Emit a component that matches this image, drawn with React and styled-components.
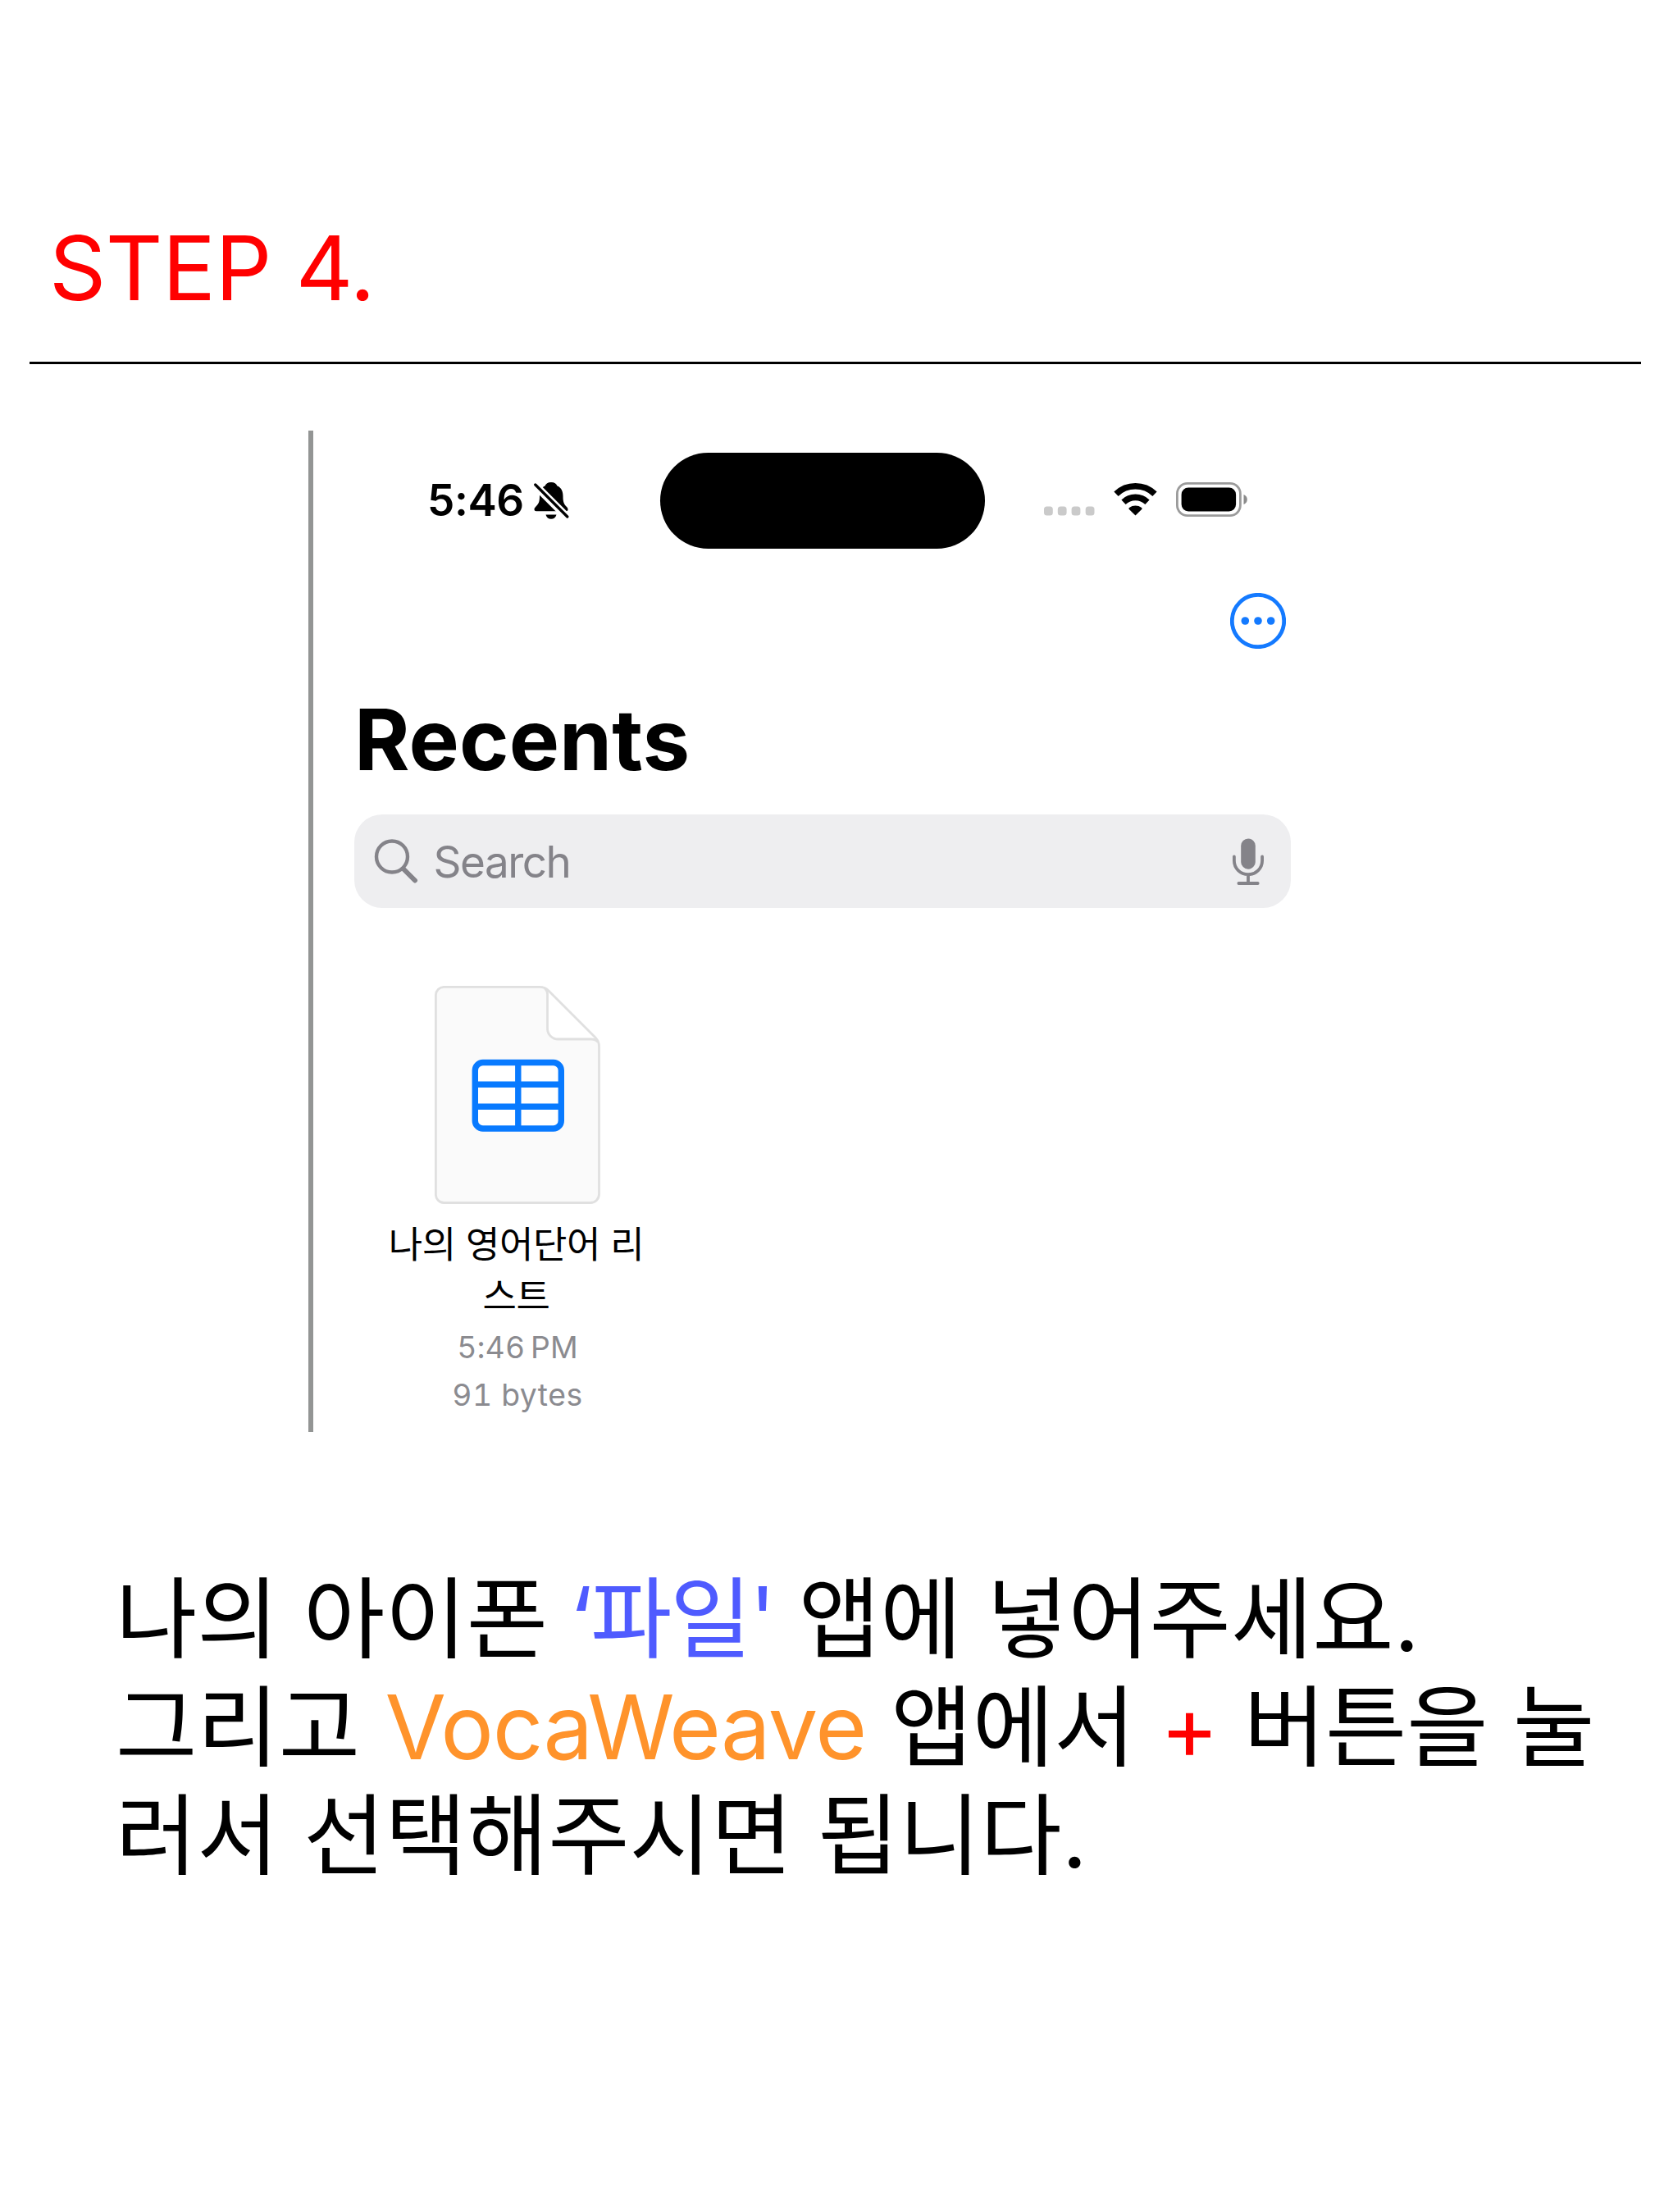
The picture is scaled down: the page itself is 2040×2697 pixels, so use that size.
import React from "react";
import styled, { createGlobalStyle } from "styled-components";

const Global = createGlobalStyle`
  body { margin: 0; background: #fff; }
`;

const Page = styled.main`
  box-sizing: border-box;
  width: 2040px;
  height: 2697px;
  padding-top: 261px;
  background: #fff;
  color: #000;
  font-family: Inter, "Noto Sans CJK KR", sans-serif;
  overflow: hidden;
`;

const StepTitle = styled.h1`
  margin: 0 39px 0 36px;
  padding: 0 0 48px 24px;
  border-bottom: 3px solid #000;
  font-size: 108px;
  font-weight: 400;
  line-height: 132px;
  letter-spacing: -0.5px;
  color: #ff0000;
`;

const Phone = styled.section`
  box-sizing: border-box;
  width: 1206px;
  height: 1221px;
  margin: 81px 0 0 376px;
  padding-top: 27px;
  border-left: 6px solid #939594;
`;

const StatusBar = styled.div`
  display: flex;
  align-items: center;
  height: 117px;
  padding-left: 139px;
`;

const Clock = styled.span`
  width: 129px;
  padding-bottom: 2px;
  font-size: 53px;
  font-weight: 600;
  line-height: 64px;
  letter-spacing: ${(p) => p.$tracking}px;
  white-space: nowrap;
`;

const Island = styled.div`
  width: 396px;
  height: 117px;
  margin: 0 72px 0 111px;
  border-radius: 59px;
  background: #000;
`;

const StatusIcons = styled.div`
  display: flex;
  align-items: center;
  gap: 23px;
  padding-bottom: 3px;
`;

const Icon = styled.svg`
  display: block;
  flex: none;
  width: ${(p) => p.$w}px;
  height: ${(p) => p.$h}px;
`;

const Toolbar = styled.div`
  display: flex;
  justify-content: flex-end;
  padding: 54px 14px 0 0;
`;

const Heading = styled.h2`
  margin: 49px 0 0 50px;
  font-size: 103px;
  font-weight: 700;
  line-height: 124px;
  letter-spacing: ${(p) => p.$tracking}px;
`;

const SearchField = styled.div`
  box-sizing: border-box;
  display: flex;
  align-items: center;
  width: 1142px;
  height: 114px;
  margin: 29px 0 0 50px;
  padding: 0 32px 0 24px;
  border-radius: 34px;
  background: #eeeef0;
  color: #848389;
`;

const Placeholder = styled.span`
  flex: 1;
  margin-left: 18.5px;
  padding-top: 2px;
  font-size: 53px;
  line-height: 64px;
  letter-spacing: ${(p) => p.$tracking}px;
`;

const FileTile = styled.div`
  display: flex;
  flex-direction: column;
  align-items: center;
  width: 340px;
  margin: 95px 0 0 79px;
`;

const FileName = styled.div`
  margin: 18px 3px 1.5px 0;
  font-size: 45px;
  line-height: 63px;
  text-align: center;
  white-space: nowrap;
  letter-spacing: ${(p) => p.$tracking}px;
`;

const FileMeta = styled.div`
  font-size: 37.3px;
  line-height: 58px;
  color: #8b8b90;
  white-space: nowrap;
  font-variant-numeric: tabular-nums;
  letter-spacing: ${(p) => p.$tracking}px;
`;

const Instructions = styled.p`
  margin: 162px 0 0 141px;
  font-size: 108px;
  line-height: 132px;
  white-space: nowrap;
`;

const Mark = styled.span`
  margin-left: ${(p) => p.$before || 0}px;
  letter-spacing: ${(p) => p.$tracking || 0}px;
  color: ${(p) => p.$color};
`;

const BellOff = () => (
  <Icon $w={44} $h={48} viewBox="0 0 44 48">
    <path d="M22 1c4 0 6.500 2 7.500 4.500 5 2 7 6.500 7 12.500 0 7 1 9.500 4.500 13 1 1.200 1.500 2.200 1.500 3.300 0 1.500-1 2-2.500 2H4c-1.500 0-2.500-.700-2.500-2.200 0-1.500.800-2.300 2-3.600C7 27 8 24.500 8 18c0-6.500 2-10.500 6.500-12.500C15.500 3 18 1 22 1z" fill="#000" />
    <path d="M15.500 40.500h13c-.800 3.300-3.400 5.300-6.500 5.300s-5.700-2-6.500-5.300z" fill="#000" />
    <path d="M0 2l43 43" stroke="#fff" strokeWidth="9.500" />
    <path d="M2.800 4l39 39" stroke="#000" strokeWidth="3.300" strokeLinecap="round" />
  </Icon>
);

const SignalDots = () => (
  <Icon $w={62} $h={42} viewBox="0 0 62 42">
    {[0, 16.800, 33.600, 50.700].map((x) => (
      <rect key={x} x={x} y="29.500" width="10.800" height="11" rx="3.500" fill="#cacaca" />
    ))}
  </Icon>
);

const Wifi = () => (
  <Icon $w={53} $h={42} viewBox="0 0 53 42">
    <g fill="none" stroke="#000" strokeWidth="7.600">
      <path d="M3 14.200a34 34 0 0 1 47 0" />
      <path d="M12 24.200a21 21 0 0 1 29 0" />
    </g>
    <path d="M26.500 40.500l-7.700-7.600c-.6-.6-.5-1.400.2-1.900a13 13 0 0 1 15 0c.7.500.8 1.300.2 1.900z" fill="#000" />
  </Icon>
);

const Battery = () => (
  <Icon $w={88} $h={42} viewBox="0 0 88 42">
    <rect x="1.400" y="1.400" width="77" height="39.200" rx="12.500" fill="none" stroke="#9b9b9b" strokeWidth="2.800" />
    <rect x="6.600" y="6.600" width="66.500" height="29" rx="8.500" fill="#000" />
    <path d="M82.500 15c2.600 1 4.300 3.300 4.300 6s-1.700 5-4.300 6z" fill="#8c8c8c" />
  </Icon>
);

const MoreCircle = () => (
  <Icon $w={68} $h={68} viewBox="0 0 68 68">
    <circle cx="34" cy="34" r="31.700" fill="none" stroke="#147aff" strokeWidth="4.800" />
    {[18.300, 34, 49.700].map((x) => (
      <circle key={x} cx={x} cy="34" r="4.800" fill="#147aff" />
    ))}
  </Icon>
);

const Magnifier = () => (
  <Icon $w={54} $h={54} viewBox="0 0 54 54">
    <g fill="none" stroke="currentColor" strokeLinecap="round">
      <circle cx="22" cy="21.500" r="19" strokeWidth="4.400" />
      <path d="M36 36.500l14 14" strokeWidth="6" />
    </g>
  </Icon>
);

const Microphone = () => (
  <Icon $w={40} $h={58} viewBox="0 0 40 58">
    <rect x="11.200" y="1.500" width="17.600" height="37.200" rx="8.800" fill="currentColor" />
    <g fill="none" stroke="currentColor" strokeWidth="3.800" strokeLinecap="round">
      <path d="M2.900 23.500v5a17.100 16.700 0 0 0 34.200 0v-5M20 46v10M8.400 56h23.300" />
    </g>
  </Icon>
);

const SheetFile = () => (
  <Icon $w={202} $h={266} viewBox="0 0 202 266">
    <path d="M11 1.300h117c5 0 8 1.500 11 4.500l57 57c3 3 4.500 6 4.500 11V254a10.500 10.500 0 0 1-10.500 10.500H11A10 10 0 0 1 1.300 254V11A10 10 0 0 1 11 1.300z" fill="#fafafa" />
    <path d="M137.500 6v46a13 13 0 0 0 13 13H196z" fill="#fff" />
    <g fill="none" stroke="#e0e0e0" strokeWidth="2.800" strokeLinejoin="round">
      <path d="M11 1.400h117c5 0 8 1.500 11 4.500l57 57c3 3 4.500 6 4.500 11V254a10.500 10.500 0 0 1-10.500 10.500H11A10 10 0 0 1 1.400 254V11A10 10 0 0 1 11 1.400z" />
      <path d="M134 2.500c2 2 3.500 4 3.500 7.500v42a13 13 0 0 0 13 13H191c3.500 0 6 1 8 3.500" />
    </g>
    <rect x="49.300" y="93.500" width="105" height="80.500" rx="9.500" fill="#fff" stroke="#087aff" strokeWidth="7.400" />
    <path d="M49.300 120.300h105M49.300 147.300h105M101.800 93.500V174" stroke="#087aff" strokeWidth="7.400" />
  </Icon>
);

export default function App() {
  return (
    <Page>
      <Global />
      <StepTitle>STEP 4.</StepTitle>
      <Phone>
        <StatusBar>
          <Clock $tracking={-0.4}>5:46</Clock>
          <BellOff />
          <Island />
          <StatusIcons>
            <SignalDots />
            <Wifi />
            <Battery />
          </StatusIcons>
        </StatusBar>
        <Toolbar>
          <MoreCircle />
        </Toolbar>
        <Heading $tracking={0.1}>Recents</Heading>
        <SearchField>
          <Magnifier />
          <Placeholder $tracking={-1.5}>Search</Placeholder>
          <Microphone />
        </SearchField>
        <FileTile>
          <SheetFile />
          <FileName $tracking={-0.4}>
            나의 영어단어 리<br />스트
          </FileName>
          <FileMeta $tracking={0.1}>5:46&#8239;PM</FileMeta>
          <FileMeta $tracking={0.5}>91 bytes</FileMeta>
        </FileTile>
      </Phone>
      <Instructions>
        나의 아이폰 <Mark $color="#4f5bff" $before={-4} $tracking={-2.6}>‘파일'</Mark> 앱에 넣어주세요.
        <br />
        그리고 <Mark $color="#ff932b" $tracking={-1.2}>VocaWeave</Mark> 앱에서 <Mark $color="#ff0000">+</Mark> 버튼을 눌
        <br />
        러서 선택해주시면 됩니다.
      </Instructions>
    </Page>
  );
}
